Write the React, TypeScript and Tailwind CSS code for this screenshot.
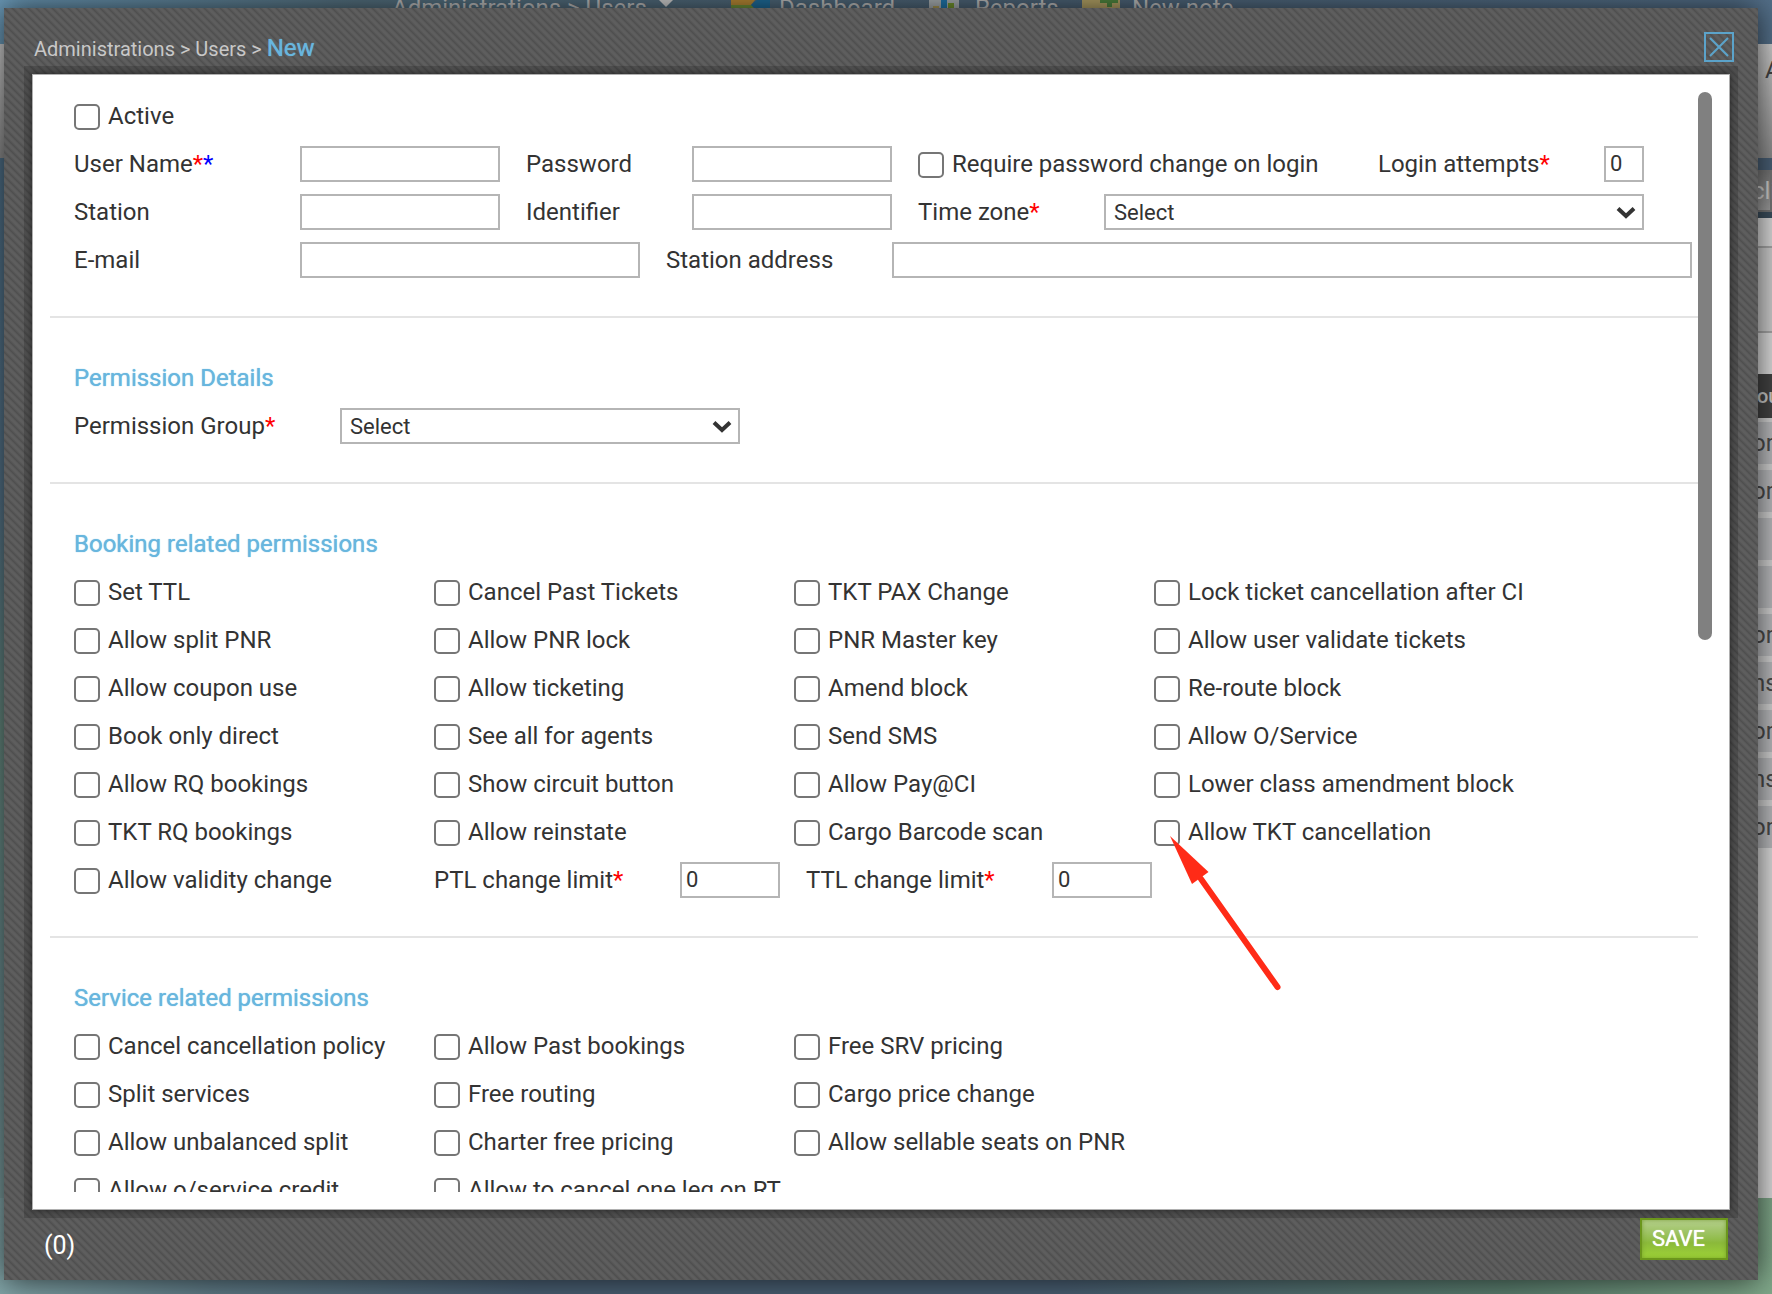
import React from 'react';

const bookingPermissions = [
  'Set TTL', 'Cancel Past Tickets', 'TKT PAX Change', 'Lock ticket cancellation after CI',
  'Allow split PNR', 'Allow PNR lock', 'PNR Master key', 'Allow user validate tickets',
  'Allow coupon use', 'Allow ticketing', 'Amend block', 'Re-route block',
  'Book only direct', 'See all for agents', 'Send SMS', 'Allow O/Service',
  'Allow RQ bookings', 'Show circuit button', 'Allow Pay@CI', 'Lower class amendment block',
  'TKT RQ bookings', 'Allow reinstate', 'Cargo Barcode scan', 'Allow TKT cancellation',
];

const servicePermissions = [
  'Cancel cancellation policy', 'Allow Past bookings', 'Free SRV pricing',
  'Split services', 'Free routing', 'Cargo price change',
  'Allow unbalanced split', 'Charter free pricing', 'Allow sellable seats on PNR',
  'Allow o/service credit', 'Allow to cancel one leg on RT',
];

const listRows = ['or', 'or', '', '', 'or', 'ns', 'or', 'ns', 'or'];

const fieldClass = 'h-9 border-2 border-[#b5b5b5] bg-white px-1 pb-0.5 text-[22px] text-[#333] outline-none';

function Required() {
  return <span className="text-[#f00]">*</span>;
}

function Check({ label }: { label: string }) {
  return (
    <label className="flex h-12 items-center gap-2 whitespace-nowrap">
      <input
        type="checkbox"
        className="mt-0.5 size-[26px] shrink-0 appearance-none rounded-[5px] border-2 border-[#767676] bg-white checked:bg-[#6bb8df]"
      />
      {label}
    </label>
  );
}

function SelectBox({ id, className }: { id: string; className: string }) {
  return (
    <div className={'relative shrink-0 ' + className}>
      <select
        id={id}
        className="block h-9 w-full appearance-none border-2 border-[#b5b5b5] bg-white px-2 pt-0.5 text-[22px] text-[#333] outline-none"
      >
        <option>Select</option>
      </select>
      <svg viewBox="0 0 20 14" className="pointer-events-none absolute top-3 right-2 h-[14px] w-5">
        <path d="M2 2.5 L10 10 L18 2.5" fill="none" stroke="#333" strokeWidth="4" />
      </svg>
    </div>
  );
}

function Section({ title, children }: { title?: string; children: React.ReactNode }) {
  return (
    <section className="border-b-2 border-[#e4e4e4] pt-9 pr-1.5 pb-8 pl-6 first:pt-0">
      {title && (
        <h2 className="h-12 leading-[48px] text-[#68b6de] [text-shadow:0_0_1px_#68b6de]">{title}</h2>
      )}
      {children}
    </section>
  );
}

function Arrow() {
  return (
    <svg viewBox="0 0 114 156" className="pointer-events-none absolute top-7 left-4 z-10 h-[156px] w-[114px]">
      <path d="M31 43 L107.5 151" stroke="#ff2b17" strokeWidth="6" strokeLinecap="round" />
      <path d="M0 0 L38.500 36 L22 48 Z" fill="#ff2b17" />
    </svg>
  );
}

function Backdrop() {
  return (
    <div
      aria-hidden="true"
      className="absolute inset-0 overflow-hidden bg-[linear-gradient(to_right,#6b9ab8_0,#54707f_20%,#4d6478_60%,#54708a_100%)]"
    >
      <div className="absolute inset-x-0 top-[158px] bottom-0 bg-[linear-gradient(to_bottom,#4f7088_0,#557388_30%,#66897f_50%,#6b8c90_75%,#82a3a3_100%)]" />
      <div className="absolute inset-x-0 bottom-0 h-24 bg-[linear-gradient(to_right,#82a5a8_0,#607c88_12%,#4a6074_30%,#4a6074_60%,#5c8070_85%,#80a88a_100%)]" />

      <div className="relative flex h-4 items-center pl-[392px] text-2xl leading-4 whitespace-nowrap text-[#bdbdbd]">
        <span className="w-[266px]">Administrations &gt; Users</span>
        <svg viewBox="0 0 16 16" className="h-4 w-4"><path d="M1 0 H15 L8 7 Z" fill="#d0d0d0" /></svg>
        <svg viewBox="0 0 40 16" className="mr-2 ml-[57px] h-4 w-10">
          <path d="M0 0 H24 L20 5 L24 9 H0 Z" fill="#b98a35" />
          <path d="M0 5 H22 V16 H0 Z" fill="#71943a" />
          <path d="M26 0 H39 V10 H25 L20 5 Z" fill="#1f6d9c" />
        </svg>
        <span className="w-[150px]">Dashboard</span>
        <svg viewBox="0 0 30 16" className="mr-4 h-4 w-[30px]">
          <path d="M0 0 H30 V16 H0 Z" fill="#aab0b3" />
          <path d="M12 0 H18 V16 H12 Z" fill="#2078ae" />
          <path d="M19 3 H25 V16 H19 Z" fill="#73952d" />
          <path d="M4 6 H10 V16 H4 Z" fill="#ae9c58" />
        </svg>
        <span className="w-[107px]">Reports</span>
        <svg viewBox="0 0 40 16" className="mr-2.5 h-4 w-10">
          <path d="M0 0 H38 V16 H0 Z" fill="#b5a467" />
          <path d="M18 0 H36 V3 H30 V7 H25 V3 H18 Z" fill="#4f8740" />
        </svg>
        <span>New note</span>
      </div>

      <div className="absolute inset-x-0 top-11 h-[114px] bg-linear-to-b from-[#cfcfcf] to-[#8d8d8d] text-2xl text-[#444]">
        <span className="absolute top-2.5 left-[calc(100%_-_7px)]">A</span>
      </div>

      <div className="absolute top-[158px] right-0 w-24 overflow-hidden text-2xl text-[#4b4b4b]">
        <div className="h-3 bg-[#4a6076]" />
        <div className="flex h-[42px] items-center border-2 border-[#777] bg-linear-to-b from-[#777] to-[#a0a0a0] pl-[74px] text-[#d0d0d0]">cli</div>
        <div className="h-1.5 bg-[#3c4f5e]" />
        <div className="h-7 bg-[#dcdcdc]" />
        <div className="h-[87px] border-y-2 border-[#a8a8a8] bg-[#d0d0d0]" />
        <div className="h-[41px] bg-[#dedede]" />
        <div className="flex h-11 items-center bg-[#444] pl-[81px] text-xl font-medium text-[#ccc]">ou</div>
        <div className="flex flex-col gap-1.5 bg-[#d5d5d5] pt-1">
          {listRows.map((text, i) => (
            <div key={i} className="flex h-[42px] items-center bg-[#bbbcbf] pl-[76px]">{text}</div>
          ))}
        </div>
        <div className="h-[350px] bg-[#dedede]" />
      </div>
    </div>
  );
}

export default function App() {
  return (
    <div className="relative h-screen w-full overflow-hidden font-[Roboto,'Liberation_Sans',sans-serif]">
      <Backdrop />
      <div className="relative h-full pt-2 pr-3.5 pb-3.5 pl-1">
        <div
          role="dialog"
          aria-label="New user"
          className="flex h-full flex-col bg-[#5c5c5c] bg-[linear-gradient(45deg,#4f4f4f_0,#5e5e5e_20%,#5e5e5e_35%,#4f4f4f_50%,#5e5e5e_70%,#5e5e5e_85%,#4f4f4f_100%)] bg-[length:8px_8px] px-7 shadow-[0_0_30px_rgba(0,0,0,0.7)]"
        >
          <header className="flex h-[66px] shrink-0 items-center justify-between pt-3">
            <nav className="flex items-baseline pt-0.5 pl-0.5 text-xl whitespace-pre text-[#c8c8c8]">
              <a href="#administrations">Administrations</a>
              <span> &gt; </span>
              <a href="#users">Users</a>
              <span> &gt; </span>
              <span className="text-2xl text-[#68b6de] [text-shadow:0_0_1px_#68b6de]">New</span>
            </nav>
            <button type="button" aria-label="Close" className="-mr-1">
              <svg viewBox="0 0 30 30" className="block size-[30px]" fill="none" stroke="#5ba3ca" strokeWidth="2">
                <rect x="1" y="1" width="28" height="28" />
                <path d="M6 6 L24 24 M24 6 L6 24" />
              </svg>
            </button>
          </header>

          <main className="relative flex min-h-0 flex-1 bg-white p-[18px] text-2xl text-[#333] shadow-[inset_0_0_0_1px_#b0b0b0,0_0_6px_rgba(0,0,0,0.5),0_0_0_8px_rgba(0,0,0,0.16)]">
            <form className="min-w-0 flex-1 overflow-y-auto [scrollbar-width:none]">
              <Section>
                <Check label="Active" />
                <div className="flex h-12 items-center whitespace-nowrap">
                  <label htmlFor="username" className="w-[226px] shrink-0">
                    User Name<Required /><span className="text-[#00f]">*</span>
                  </label>
                  <input id="username" className={fieldClass + ' w-[200px]'} />
                  <label htmlFor="password" className="ml-[26px] w-[166px] shrink-0">Password</label>
                  <input id="password" type="password" className={fieldClass + ' mr-[26px] w-[200px]'} />
                  <div className="w-[460px] shrink-0"><Check label="Require password change on login" /></div>
                  <label htmlFor="attempts" className="w-[226px] shrink-0">Login attempts<Required /></label>
                  <input id="attempts" defaultValue="0" className={fieldClass + ' w-10'} />
                </div>
                <div className="flex h-12 items-center whitespace-nowrap">
                  <label htmlFor="station" className="w-[226px] shrink-0">Station</label>
                  <input id="station" className={fieldClass + ' w-[200px]'} />
                  <label htmlFor="identifier" className="ml-[26px] w-[166px] shrink-0">Identifier</label>
                  <input id="identifier" className={fieldClass + ' mr-[26px] w-[200px]'} />
                  <label htmlFor="timezone" className="w-[186px] shrink-0">Time zone<Required /></label>
                  <SelectBox id="timezone" className="w-[540px]" />
                </div>
                <div className="flex h-12 items-center whitespace-nowrap">
                  <label htmlFor="email" className="w-[226px] shrink-0">E-mail</label>
                  <input id="email" type="email" className={fieldClass + ' w-[340px]'} />
                  <label htmlFor="address" className="ml-[26px] w-[226px] shrink-0">Station address</label>
                  <input id="address" className={fieldClass + ' min-w-0 flex-1'} />
                </div>
              </Section>

              <Section title="Permission Details">
                <div className="flex h-12 items-center">
                  <label htmlFor="group" className="w-[266px] shrink-0">Permission Group<Required /></label>
                  <SelectBox id="group" className="w-[400px]" />
                </div>
              </Section>

              <Section title="Booking related permissions">
                <div className="grid grid-cols-[repeat(4,360px)]">
                  {bookingPermissions.map((label) => (
                    <div key={label} className="relative">
                      <Check label={label} />
                      {label === 'Allow TKT cancellation' && <Arrow />}
                    </div>
                  ))}
                </div>
                <div className="flex h-12 items-center whitespace-nowrap">
                  <div className="w-[360px] shrink-0"><Check label="Allow validity change" /></div>
                  <label htmlFor="ptl" className="w-[246px] shrink-0">PTL change limit<Required /></label>
                  <input id="ptl" defaultValue="0" className={fieldClass + ' w-[100px]'} />
                  <label htmlFor="ttl" className="ml-[26px] w-[246px] shrink-0">TTL change limit<Required /></label>
                  <input id="ttl" defaultValue="0" className={fieldClass + ' w-[100px]'} />
                </div>
              </Section>

              <Section title="Service related permissions">
                <div className="grid grid-cols-[repeat(3,360px)]">
                  {servicePermissions.map((label) => <Check key={label} label={label} />)}
                </div>
              </Section>
            </form>
            <div className="h-[548px] w-3.5 shrink-0 rounded-[7px] bg-[#808080]" />
          </main>

          <footer className="relative flex h-[70px] shrink-0 items-start justify-between pt-2">
            <span className="pl-3 text-[25px] leading-[56px] text-white">(0)</span>
            <button
              type="button"
              className="mr-0.5 h-[42px] w-[88px] border-2 border-[#6b961c] bg-linear-to-b from-[#b5cf8c] via-[#8bb93a] via-60% to-[#9ed436] pb-0.5 pl-2.5 text-left text-[22px] text-white [text-shadow:0_0_1px_#fff] shadow-[inset_0_0_4px_rgba(110,150,40,0.8)]"
            >
              SAVE
            </button>
          </footer>
        </div>
      </div>
    </div>
  );
}
